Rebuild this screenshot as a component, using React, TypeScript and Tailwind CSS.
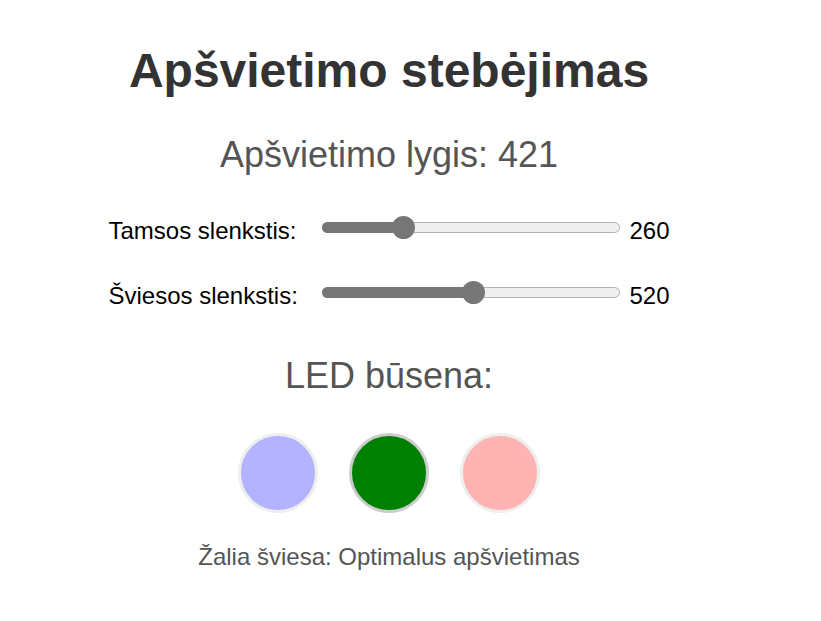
import React, { useState } from "react";

const MAX = 1023;

function Slider({ value, onChange }: { value: number; onChange: (v: number) => void }) {
  const pct = value / MAX;
  const trackW = 298;
  const thumb = 23;
  const thumbLeft = pct * (trackW - thumb);
  return (
    <div className="relative h-[23px] w-[298px] shrink-0">
      <div className="absolute left-0 right-0 top-[6px] h-[11px] rounded-full border border-[#b2b2b2] bg-[#efefef]" />
      <div
        className="absolute left-0 top-[6px] h-[11px] rounded-l-full bg-[#767676]"
        style={{ width: thumbLeft + thumb / 2 }}
      />
      <div
        className="absolute top-0 h-[23px] w-[23px] rounded-full bg-[#767676]"
        style={{ left: thumbLeft }}
      />
      <input
        type="range"
        min={0}
        max={MAX}
        value={value}
        onChange={(e) => onChange(Number(e.target.value))}
        className="absolute inset-0 h-full w-full cursor-pointer opacity-0"
      />
    </div>
  );
}

function Row({ label, value, onChange }: { label: string; value: number; onChange: (v: number) => void }) {
  return (
    <div className="flex items-start">
      <label className="mt-[1px] w-[214px] text-[24px] leading-[28px] text-black">{label}</label>
      <Slider value={value} onChange={onChange} />
      <span className="ml-[9px] mt-[1px] text-[24px] leading-[28px] text-black">{value}</span>
    </div>
  );
}

export default function App() {
  const [dark, setDark] = useState(260);
  const [light, setLight] = useState(520);
  return (
    <div
      className="min-h-[621px] w-[778px] bg-white"
      style={{ fontFamily: '"Liberation Sans", Arial, sans-serif' }}
    >
      <div className="flex flex-col items-center pt-[43px]">
        <h1 className="text-[48px] font-bold leading-[56px] text-[#333]">Apšvietimo stebėjimas</h1>
        <p className="mt-[35px] text-[36px] leading-[42px] text-[#555]">Apšvietimo lygis: 421</p>
        <div className="mt-[40px] flex flex-col gap-[36px]">
          <Row label="Tamsos slenkstis:" value={dark} onChange={setDark} />
          <Row label="Šviesos slenkstis:" value={light} onChange={setLight} />
        </div>
        <h2 className="mt-[45px] text-[36px] leading-[42px] text-[#555]">LED būsena:</h2>
        <div className="mt-[36px] flex gap-[31px]">
          <div className="h-[80px] w-[80px] rounded-full border-[3px] border-[#eeeeee] bg-[#b3b3ff]" />
          <div className="h-[80px] w-[80px] rounded-full border-[3px] border-[#cccccc] bg-[#008000]" />
          <div className="h-[80px] w-[80px] rounded-full border-[3px] border-[#eeeeee] bg-[#ffb3b3]" />
        </div>
        <p className="mt-[30px] text-[24px] leading-[28px] text-[#555]">Žalia šviesa: Optimalus apšvietimas</p>
      </div>
    </div>
  );
}
